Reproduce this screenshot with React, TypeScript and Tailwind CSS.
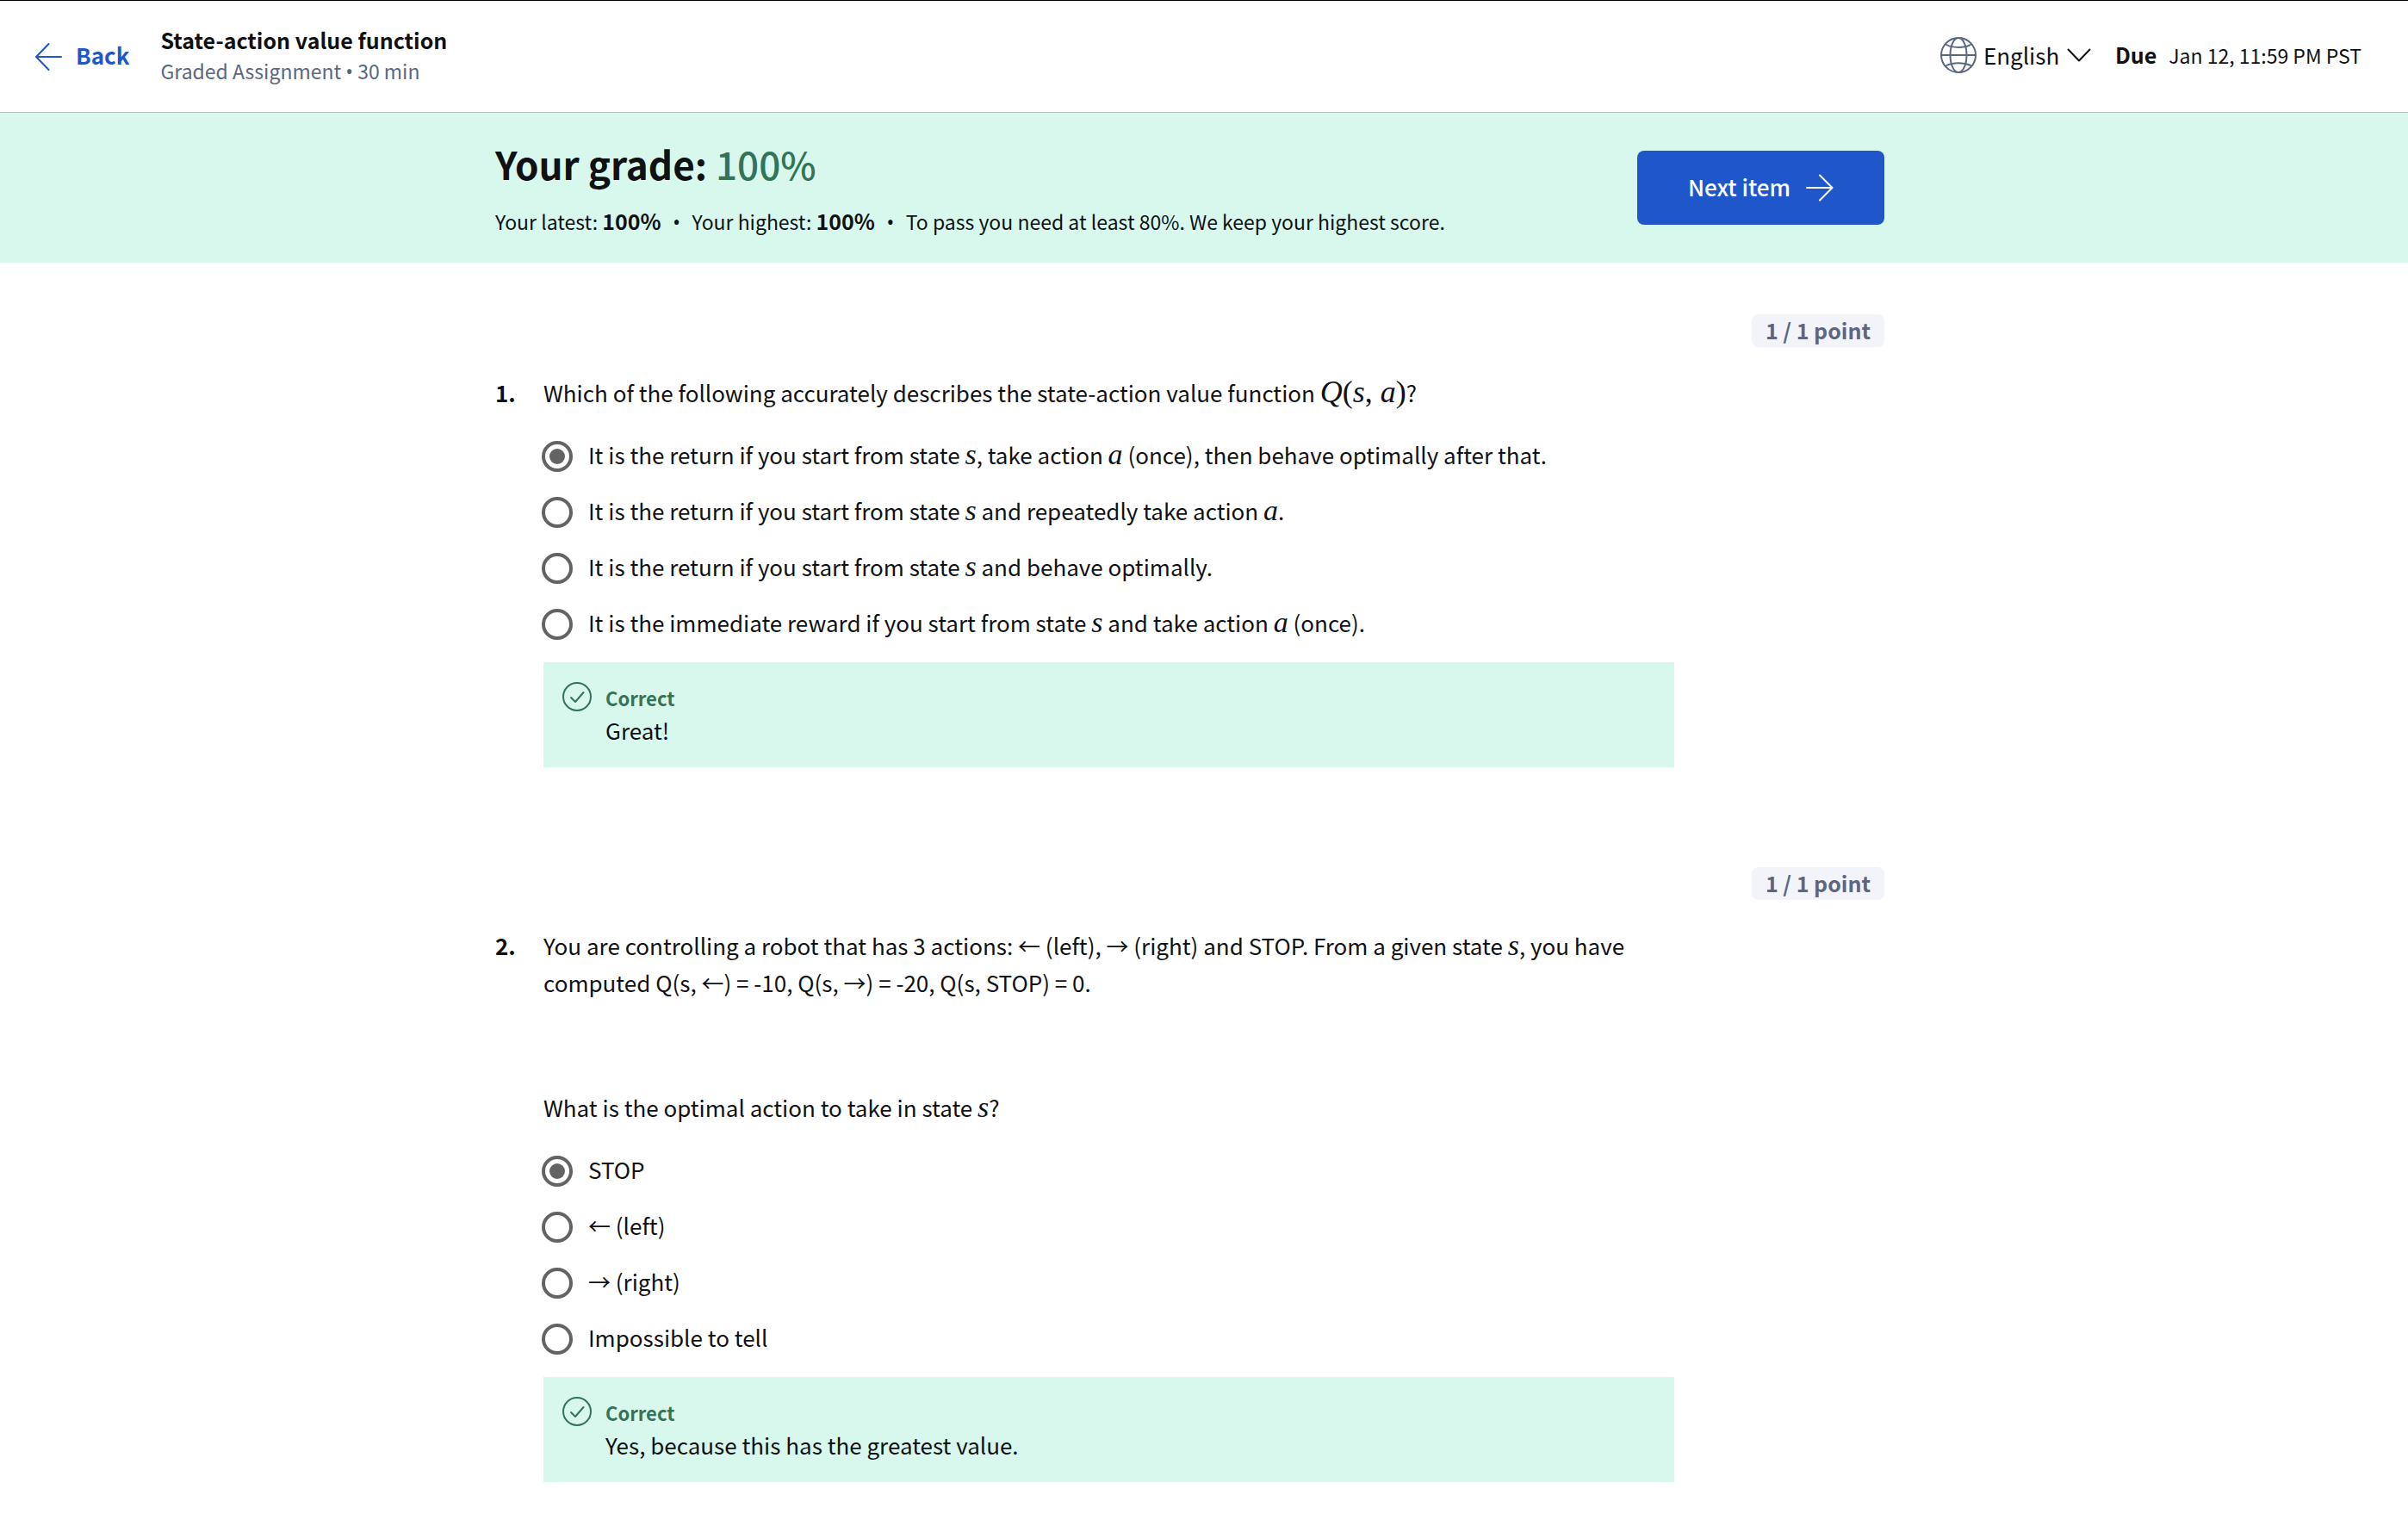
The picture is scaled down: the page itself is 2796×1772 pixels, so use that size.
import React, { useState } from "react";

const strokeProps = {
  fill: "none",
  stroke: "currentColor",
  strokeWidth: 2,
  strokeLinecap: "round" as const,
  strokeLinejoin: "round" as const,
};

function ArrowLeft() {
  return (
    <svg viewBox="0 0 32 32" className="size-8" aria-hidden="true" {...strokeProps}>
      <path d="M31 16H2M16.500 1L2 16l14.500 15" />
    </svg>
  );
}

function ArrowRight() {
  return (
    <svg viewBox="0 0 32 32" className="size-8" aria-hidden="true" {...strokeProps}>
      <path d="M1 16h29M16 1.500L30.500 16 16 30.500" />
    </svg>
  );
}

function Globe() {
  return (
    <svg viewBox="0 0 42 42" className="size-[42px] text-[#5b6780]" aria-hidden="true" {...strokeProps}>
      <circle cx="21" cy="21" r="20" />
      <ellipse cx="21" cy="21" rx="9.500" ry="20" />
      <path d="M1 21h40M6 8.500c8 4.500 22 4.500 30 0M6 33.500c8-4.500 22-4.500 30 0" />
    </svg>
  );
}

function ChevronDown() {
  return (
    <svg viewBox="0 0 28 16" className="h-4 w-7" aria-hidden="true" {...strokeProps}>
      <path d="M1.500 1.500L14 14.500 26.500 1.500" />
    </svg>
  );
}

function CheckCircle() {
  return (
    <svg viewBox="0 0 34 34" className="size-[34px] shrink-0" aria-hidden="true" {...strokeProps}>
      <circle cx="17" cy="17" r="16" />
      <path d="M10 18l5 5 9.500-11" />
    </svg>
  );
}

function M({ children }: { children: React.ReactNode }) {
  return <i className="font-['Liberation_Serif',serif] text-[34px] leading-none italic">{children}</i>;
}

function Header() {
  return (
    <header className="flex h-[131px] items-center justify-between border-t border-b border-t-black border-b-[#bdbdbd] pr-[54px] pl-10">
      <div className="flex items-center">
        <a href="#back" className="flex items-center gap-4 text-[#1f57cb]">
          <ArrowLeft />
          <span className="pb-1 text-[26px] leading-10 font-bold">Back</span>
        </a>
        <div className="ml-9 pb-0.5">
          <h1 className="text-[25px] leading-9 font-bold">State-action value function</h1>
          <p className="text-[23px] leading-9 text-[#5b6780]">
            Graded Assignment <span className="font-['Noto_Sans',sans-serif]">•</span> 30 min
          </p>
        </div>
      </div>
      <div className="flex items-center pb-1">
        <label className="flex items-center gap-2">
          <Globe />
          <select aria-label="Language" className="appearance-none bg-transparent text-[26px] leading-10">
            <option>English</option>
          </select>
          <ChevronDown />
        </label>
        <p className="ml-7 flex items-baseline gap-3.5">
          <span className="text-[25px] leading-10 font-bold">Due</span>
          <span className="text-[23px] leading-10">Jan 12, 11:59 PM PST</span>
        </p>
      </div>
    </header>
  );
}

function GradeBanner() {
  return (
    <section className="bg-[#d8f8ed] pr-[33px]">
      <div className="mx-auto flex h-[174px] max-w-[1613px] items-center justify-between">
        <div className="pt-2.5">
          <h2 className="text-[44px] leading-[68px] font-bold">
            Your grade: <span className="font-medium text-[#33735a]">100%</span>
          </h2>
          <p className="flex items-baseline text-[23px] leading-[64px]">
            <span>
              Your latest: <b className="text-[25px] font-bold">100%</b>
            </span>
            <span className="w-9 text-center font-['Noto_Sans',sans-serif]">•</span>
            <span>
              Your highest: <b className="text-[25px] font-bold">100%</b>
            </span>
            <span className="w-9 text-center font-['Noto_Sans',sans-serif]">•</span>
            <span>To pass you need at least 80%. We keep your highest score.</span>
          </p>
        </div>
        <button
          type="button"
          className="flex h-[86px] w-[287px] items-center justify-center gap-[18px] rounded-lg bg-[#1f57cb] text-[26px] font-medium text-white"
        >
          <span className="pb-1">Next item</span>
          <ArrowRight />
        </button>
      </div>
    </section>
  );
}

type QuestionProps = {
  number: number;
  prompt: React.ReactNode;
  options: React.ReactNode[];
  feedback: string;
};

function Question({ number, prompt, options, feedback }: QuestionProps) {
  const [selected, setSelected] = useState(0);
  return (
    <section>
      <div className="flex justify-end">
        <span className="rounded-lg bg-[#f2f4fa] px-4 pb-0.5 text-[25px] leading-9 font-bold text-[#5b6780]">
          1 / 1 point
        </span>
      </div>
      <div className="mt-[31px] flex text-[26px] leading-[43px]">
        <span className="w-[56px] shrink-0 font-bold">{number}.</span>
        <fieldset className="min-w-0 max-w-[1313px] flex-1">
          <legend className="pb-5">{prompt}</legend>
          {options.map((option, i) => (
            <label key={i} className="flex h-[65px] items-center gap-[18px]">
              <input
                type="radio"
                name={`question-${number}`}
                checked={selected === i}
                onChange={() => setSelected(i)}
                className="-ml-0.5 size-9 shrink-0 appearance-none rounded-full border-4 border-[#636363] bg-clip-content p-[5px] checked:bg-[#636363]"
              />
              <span className="pb-1">{option}</span>
            </label>
          ))}
          <div className="mt-3 flex h-[122px] gap-4 bg-[#d8f8ed] px-[22px] pt-[23px]">
            <span className="text-[#33735a]">
              <CheckCircle />
            </span>
            <div>
              <p className="text-[22px] leading-9 font-bold text-[#33735a]">Correct</p>
              <p className="leading-10">{feedback}</p>
            </div>
          </div>
        </fieldset>
      </div>
    </section>
  );
}

export default function App() {
  return (
    <div className="min-h-screen bg-white font-['Noto_Sans_CJK_SC',sans-serif] text-[#0f1114]">
      <Header />
      <GradeBanner />
      <main className="pt-[60px] pr-[33px] pb-[49px]">
        <div className="mx-auto flex max-w-[1613px] flex-col gap-[116px]">
          <Question
            number={1}
            prompt={
              <>
                Which of the following accurately describes the state-action value function{" "}
                <span className="font-['Liberation_Serif',serif] text-[36px] leading-none">
                  <i>Q</i>(<i>s</i>, <i>a</i>)
                </span>
                ?
              </>
            }
            options={[
              <>
                It is the return if you start from state <M>s</M>, take action <M>a</M> (once), then behave optimally
                after that.
              </>,
              <>
                It is the return if you start from state <M>s</M> and repeatedly take action <M>a</M>.
              </>,
              <>
                It is the return if you start from state <M>s</M> and behave optimally.
              </>,
              <>
                It is the immediate reward if you start from state <M>s</M> and take action <M>a</M> (once).
              </>,
            ]}
            feedback="Great!"
          />
          <Question
            number={2}
            prompt={
              <>
                <p>
                  You are controlling a robot that has 3 actions: ← (left), → (right) and STOP. From a given state{" "}
                  <M>s</M>, you have computed Q(s, ←) = -10, Q(s, →) = -20, Q(s, STOP) = 0.
                </p>
                <p className="mt-[102px]">
                  What is the optimal action to take in state <M>s</M>?
                </p>
              </>
            }
            options={["STOP", "← (left)", "→ (right)", "Impossible to tell"]}
            feedback="Yes, because this has the greatest value."
          />
        </div>
      </main>
    </div>
  );
}
